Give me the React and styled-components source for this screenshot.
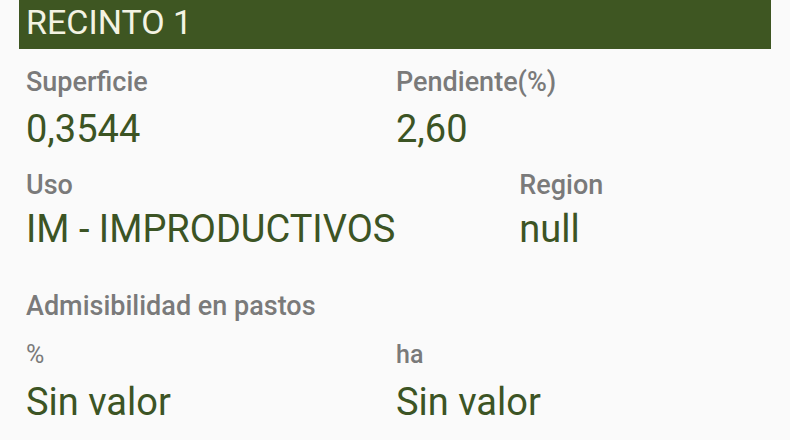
import React from "react";
import styled, { createGlobalStyle } from "styled-components";

const GlobalStyle = createGlobalStyle`
  html, body {
    margin: 0;
    padding: 0;
    background: #fafafa;
  }
  body {
    font-family: Roboto, "Liberation Sans", sans-serif;
    width: 790px;
    height: 440px;
    overflow: hidden;
  }
`;

// Ficha del recinto con sus datos principales.
const App = () => {
  return (
    <Page>
      <GlobalStyle />
      <Header>RECINTO 1</Header>
      <Content>
        <Row $cols="1fr 1fr">
          <Field>
            <Label>Superficie</Label>
            <Value>0,3544</Value>
          </Field>
          <Field>
            <Label>Pendiente(%)</Label>
            <Value>2,60</Value>
          </Field>
        </Row>
        <Row $cols="2fr 1fr" $top={24}>
          <Field>
            <Label>Uso</Label>
            <Value $gap={11}>IM - IMPRODUCTIVOS</Value>
          </Field>
          <Field>
            <Label>Region</Label>
            <Value $gap={11}>null</Value>
          </Field>
        </Row>
        <Section>Admisibilidad en pastos</Section>
        <Row $cols="1fr 1fr" $top={22}>
          <Field>
            <SmallLabel $light>%</SmallLabel>
            <Value $gap={16}>Sin valor</Value>
          </Field>
          <Field>
            <SmallLabel>ha</SmallLabel>
            <Value $gap={16}>Sin valor</Value>
          </Field>
        </Row>
      </Content>
    </Page>
  );
};

const Page = styled.div`
  width: 790px;
  height: 440px;
  background: #fafafa;
  padding: 0 19px;
  box-sizing: border-box;
`;

const Header = styled.div`
  height: 49px;
  background-color: #3e5622;
  color: #f3f3e3;
  font-size: 34px;
  line-height: 44px;
  padding-left: 7px;
  font-weight: 400;
  box-sizing: border-box;
`;

const Content = styled.div`
  padding: 20px 5px 0 7px;
`;

const Row = styled.div`
  display: grid;
  grid-template-columns: ${(props) => props.$cols};
  margin-top: ${(props) => props.$top || 0}px;
`;

const Field = styled.div`
  display: flex;
  flex-direction: column;
`;

const Label = styled.div`
  font-size: 27px;
  line-height: 27px;
  font-weight: 500;
  color: #7a7a7a;
  white-space: nowrap;
`;

const SmallLabel = styled.div`
  font-size: 25px;
  line-height: 25px;
  font-weight: ${(props) => (props.$light ? 400 : 500)};
  color: #7a7a7a;
`;

const Value = styled.div`
  font-size: 38px;
  line-height: 38px;
  color: #3c5424;
  margin-top: ${(props) => props.$gap || 14}px;
  white-space: nowrap;
`;

const Section = styled(Label)`
  margin-top: 45px;
`;

export default App;
